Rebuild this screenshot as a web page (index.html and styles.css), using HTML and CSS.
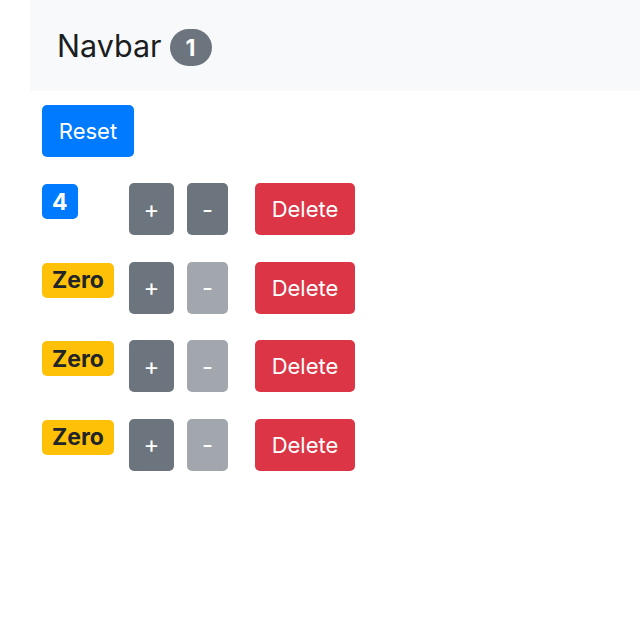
FILE: index.html
```html
<!DOCTYPE html>
<html>
<head>
<meta charset="utf-8">
<link rel="stylesheet" href="styles.css">
</head>
<body>
<div class="page">
  <nav class="navbar">
    <span class="brand">Navbar</span>
    <span class="pill">1</span>
  </nav>
  <main class="content">
    <button class="btn btn-primary reset">Reset</button>
    <div class="counter">
      <div class="badge-col"><span class="badge badge-primary">4</span></div>
      <button class="btn btn-secondary plus">+</button>
      <button class="btn btn-secondary minus">-</button>
      <button class="btn btn-danger delete">Delete</button>
    </div>
    <div class="counter">
      <div class="badge-col"><span class="badge badge-warning">Zero</span></div>
      <button class="btn btn-secondary plus">+</button>
      <button class="btn btn-secondary minus disabled">-</button>
      <button class="btn btn-danger delete">Delete</button>
    </div>
    <div class="counter">
      <div class="badge-col"><span class="badge badge-warning">Zero</span></div>
      <button class="btn btn-secondary plus">+</button>
      <button class="btn btn-secondary minus disabled">-</button>
      <button class="btn btn-danger delete">Delete</button>
    </div>
    <div class="counter">
      <div class="badge-col"><span class="badge badge-warning">Zero</span></div>
      <button class="btn btn-secondary plus">+</button>
      <button class="btn btn-secondary minus disabled">-</button>
      <button class="btn btn-danger delete">Delete</button>
    </div>
  </main>
</div>
</body>
</html>
```
FILE: styles.css
```css
* { box-sizing: border-box; }
html, body { margin: 0; padding: 0; background: #fff; }
body {
  font-family: Inter, "Noto Sans", "Liberation Sans", sans-serif;
  color: #212529;
}
.page { padding-left: 30px; }
.navbar {
  height: 91px;
  background: #f8f9fa;
  display: flex;
  align-items: center;
  padding-left: 27px;
}
.brand {
  font-size: 30.5px;
  color: #1b1e21;
  margin-right: 8px;
}
.pill {
  display: inline-flex;
  align-items: center;
  justify-content: center;
  width: 42px;
  height: 37px;
  border-radius: 19px;
  background: #6c757d;
  color: #fff;
  font-weight: 700;
  font-size: 23px;
  margin-top: 4px;
}
.content {
  padding: 14px 12px;
  display: flex;
  flex-direction: column;
  align-items: flex-start;
}
.btn {
  font-family: inherit;
  border: 0;
  border-radius: 5px;
  height: 52px;
  font-size: 22px;
  color: #fff;
  display: inline-flex;
  align-items: center;
  justify-content: center;
  padding: 0;
  cursor: pointer;
}
.btn-primary { background: #007bff; }
.btn-secondary { background: #6c757d; font-size: 24px; }
.btn-secondary.disabled { background: #a1a7ac; }
.btn-danger { background: #dc3545; }
.reset { width: 92px; margin-bottom: 26px; }
.counter {
  display: flex;
  align-items: flex-start;
  margin-bottom: 26.5px;
}
.badge-col { width: 87px; padding-top: 1px; }
.badge {
  display: inline-flex;
  align-items: center;
  justify-content: center;
  height: 35px;
  padding: 0 10px;
  border-radius: 5px;
  font-weight: 700;
  font-size: 23px;
}
.badge-primary { background: #007bff; color: #fff; min-width: 35px; }
.badge-warning { background: #ffc107; color: #212529; width: 72px; }
.plus { width: 45px; margin-right: 13px; }
.minus { width: 41px; margin-right: 27px; }
.delete { width: 100px; }
```
